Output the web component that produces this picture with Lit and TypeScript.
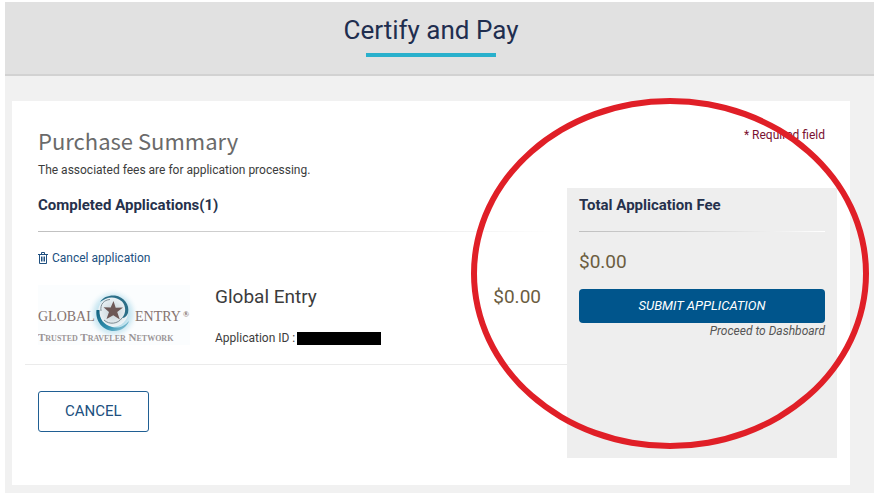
import { LitElement, html, css } from "lit";
import { customElement, property } from "lit/decorators.js";

@customElement("global-entry-logo")
export class GlobalEntryLogo extends LitElement {
  static styles = css`
    :host {
      display: block;
    }
    svg {
      display: block;
      width: 100%;
      height: auto;
    }
    .name {
      font: 14px "Liberation Serif", serif;
      fill: #85736f;
    }
    .mark {
      font: bold 8px "Liberation Serif", serif;
      fill: #85736f;
    }
    .network {
      font: bold 11px "Liberation Serif", serif;
      font-variant: small-caps;
      fill: #9a9496;
    }
  `;

  render() {
    return html`
      <svg viewBox="0 0 152 60" role="img" aria-label="Global Entry, Trusted Traveler Network">
        <defs>
          <radialGradient id="glow">
            <stop offset="0.5" stop-color="#b4dcea" />
            <stop offset="0.75" stop-color="#dceff6" />
            <stop offset="1" stop-color="#fbfdfe" stop-opacity="0" />
          </radialGradient>
          <radialGradient id="disc">
            <stop offset="0" stop-color="#c4cfd5" />
            <stop offset="1" stop-color="#edf4f7" />
          </radialGradient>
          <linearGradient id="sweep" x1="0" y1="0" x2="1" y2="1">
            <stop offset="0" stop-color="#0f5f7d" />
            <stop offset="0.6" stop-color="#3391b0" />
            <stop offset="1" stop-color="#9fd0e0" />
          </linearGradient>
        </defs>
        <rect width="152" height="60" fill="#fbfdfe" />
        <circle cx="75" cy="29" r="26" fill="url(#glow)" />
        <circle cx="75" cy="27" r="15" fill="url(#disc)" />
        <path d="M58.500 25C57 36 65 46 76 46C83 46 89 42 91 36C86 42 80 43.500 74 42C66 40 61 34 61.500 25Z" fill="url(#sweep)" />
        <path d="M62 17C65 12 71 10 77 10.500C86 12 92 20 90 28C88.500 32 86 33 84 33C88.500 28 88 21 84 16.500C77 10.500 69 11.500 62 17Z" fill="#2c6f88" />
        <path d="M63 26C62 19 66 15 72 14.500M66 35C71 40 80 39 84 33" fill="none" stroke="#7d8b92" />
        <path d="M75.500 16L77.700 22.800L85 22.500L79.200 27L81.800 34.500L75.300 30.200L68.500 34L71 27L65.500 22.300L72.700 22.600Z" fill="#6d5856" />
        <text class="name" x="0" y="36">GLOBAL</text>
        <text class="name" x="97" y="36">ENTRY</text>
        <text class="mark" x="145" y="32">®</text>
        <text class="network" x="0" y="56">Trusted Traveler Network</text>
      </svg>
    `;
  }
}

@customElement("app-root")
export class AppRoot extends LitElement {
  @property() fee = "$0.00";

  static styles = css`
    :host {
      display: block;
      padding: 2px 6px 4px 5px;
      background: #fff;
      color: #3c3c3c;
      font: 12px/20px Roboto, "Liberation Sans", sans-serif;
    }
    * {
      box-sizing: border-box;
    }
    h1,
    h2,
    h3,
    h4,
    p {
      margin: 0;
      font-weight: 400;
    }
    a {
      color: #205080;
      text-decoration: none;
    }
    button {
      font: inherit;
      cursor: pointer;
    }
    .page {
      background: #f1f1f1;
      padding-bottom: 8px;
    }
    .banner {
      display: flex;
      flex-direction: column;
      align-items: center;
      gap: 7px;
      padding: 12px 24px 17px 7px;
      background: #e1e1e1;
      border-bottom: 2px solid #d2d2d2;
    }
    .banner h1 {
      font-size: 26px;
      line-height: 32px;
      color: #1f2e4f;
    }
    .accent {
      width: 130px;
      height: 4px;
      background: #29b0cc;
    }
    .card {
      position: relative;
      margin: 25px 24px 0 7px;
      padding: 24px 13px 27px;
      background: #fff;
    }
    .intro {
      display: flex;
      justify-content: space-between;
      padding: 0 12px 8px 13px;
    }
    .intro h2 {
      margin-bottom: 5px;
      font-family: "Noto Sans CJK SC", "Open Sans", sans-serif;
      font-size: 22px;
      line-height: 30px;
      color: #6a6a6a;
    }
    .required {
      color: #7a1030;
    }
    .columns {
      display: grid;
      grid-template-columns: minmax(0, 1fr) 270px;
    }
    .applications {
      display: flex;
      flex-direction: column;
      align-items: stretch;
    }
    .section {
      padding: 7px 13px 0;
    }
    h3 {
      font-size: 15px;
      font-weight: 700;
      color: #26314c;
    }
    .rule {
      height: 1px;
      margin: 16px 0;
      background: linear-gradient(to right, #c0c0c0, #d0d0d0 40%, #fff);
    }
    .remove {
      display: inline-flex;
      align-items: center;
      gap: 4px;
    }
    .remove svg {
      width: 10px;
      height: 12px;
    }
    .application {
      display: grid;
      grid-template-columns: 152px minmax(0, 1fr) auto;
      align-items: start;
      column-gap: 25px;
      padding: 15px 26px 16px 13px;
      border-bottom: 1px solid #ebebeb;
    }
    .details {
      display: flex;
      flex-direction: column;
      gap: 19px;
    }
    .details h4,
    .price {
      font-size: 19px;
      line-height: 24px;
    }
    .price {
      color: #6b5d3f;
    }
    .identifier {
      display: flex;
      align-items: center;
      gap: 2px;
    }
    .redacted {
      width: 84px;
      height: 13px;
      background: #000;
    }
    .cancel {
      align-self: flex-start;
      margin: 26px 13px 0;
      padding: 9px 26px;
      border: 1px solid #205f93;
      border-radius: 3px;
      background: #fff;
      color: #205080;
      font-size: 15px;
      line-height: 21px;
    }
    .total {
      min-height: 270px;
      padding: 7px 12px;
      background: #eee;
    }
    .total .price {
      line-height: 28px;
    }
    .submit {
      display: block;
      width: 100%;
      margin-top: 13px;
      padding: 7px;
      border: 0;
      border-radius: 4px;
      background: #00558c;
      color: #fff;
      font-size: 13px;
      font-style: italic;
    }
    .hint {
      line-height: 16px;
      font-style: italic;
      text-align: right;
      color: #555;
    }
    .highlight {
      position: absolute;
      top: -3px;
      right: -19px;
      width: 398px;
      height: 351px;
      border: 6px solid #e01f27;
      border-radius: 50%;
      pointer-events: none;
    }
  `;

  render() {
    return html`
      <div class="page">
        <header class="banner">
          <h1>Certify and Pay</h1>
          <div class="accent"></div>
        </header>
        <main class="card">
          <div class="intro">
            <div>
              <h2>Purchase Summary</h2>
              <p>The associated fees are for application processing.</p>
            </div>
            <p class="required">* Required field</p>
          </div>
          <div class="columns">
            <section class="applications">
              <div class="section">
                <h3>Completed Applications(1)</h3>
                <div class="rule"></div>
                <a class="remove" href="#cancel-application">
                  <svg viewBox="0 0 10 12" fill="none" stroke="currentColor" aria-hidden="true">
                    <path d="M0 2.500H10M3.500 2V.5H6.500V2M1.500 3V11.500H8.500V3M3.500 4.500V9.500M5 4.500V9.500M6.500 4.500V9.500" />
                  </svg>
                  Cancel application
                </a>
              </div>
              <div class="application">
                <global-entry-logo></global-entry-logo>
                <div class="details">
                  <h4>Global Entry</h4>
                  <p class="identifier">Application ID :<span class="redacted"></span></p>
                </div>
                <p class="price">${this.fee}</p>
              </div>
              <button class="cancel" type="button">CANCEL</button>
            </section>
            <aside class="total">
              <h3>Total Application Fee</h3>
              <div class="rule"></div>
              <p class="price">${this.fee}</p>
              <button class="submit" type="submit">SUBMIT APPLICATION</button>
              <p class="hint">Proceed to Dashboard</p>
            </aside>
          </div>
          <div class="highlight"></div>
        </main>
      </div>
    `;
  }
}
